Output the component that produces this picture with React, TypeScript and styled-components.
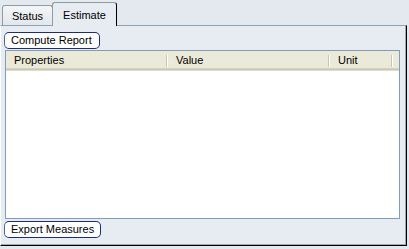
import styled, { createGlobalStyle } from "styled-components";

const GlobalStyle = createGlobalStyle`
  html, body {
    margin: 0;
    padding: 0;
    background: #e3e9ef;
  }
  body {
    font-family: "Liberation Sans", Arial, sans-serif;
    font-size: 11px;
    color: #000;
  }
`;

const Window = styled.div`
  width: 409px;
  height: 249px;
  display: flex;
  flex-direction: column;
  box-sizing: border-box;
  background: #e3e9ef;
`;

const TabBar = styled.div`
  display: flex;
  align-items: flex-end;
  height: 25px;
  padding-left: 2px;
`;

const Tab = styled.div<{ active?: boolean; w: number }>`
  box-sizing: border-box;
  width: ${({ w }) => w}px;
  height: ${({ active }) => (active ? 24 : 20)}px;
  display: flex;
  align-items: center;
  justify-content: center;
  padding-top: ${({ active }) => (active ? 1 : 0)}px;
  border: 1px solid #919b9c;
  border-bottom: none;
  border-right-color: ${({ active }) => (active ? "#000" : "#919b9c")};
  border-radius: 3px 3px 0 0;
  background: ${({ active }) =>
    active ? "#e6ecf2" : "linear-gradient(#f4f6f8, #e2e7ec)"};
  margin-bottom: ${({ active }) => (active ? -1 : 0)}px;
  position: relative;
  z-index: ${({ active }) => (active ? 1 : 0)};
  & + & {
    margin-left: -1px;
  }
`;

const Panel = styled.div`
  box-sizing: border-box;
  width: 407px;
  height: 221px;
  display: flex;
  flex-direction: column;
  align-items: flex-start;
  padding: 6px 6px 0 3px;
  background: #e6ecf2;
  border-top: 1px solid #8fa2b4;
  border-left: 1px solid #ffffff;
  border-right: 1px solid #000;
  border-bottom: 1px solid #000;
  box-shadow: inset -1px -1px 0 #a0a8ad;
`;

const Button = styled.button<{ w: number }>`
  box-sizing: border-box;
  width: ${({ w }) => w}px;
  height: 17px;
  padding: 0 0 0 6px;
  text-align: left;
  font: inherit;
  color: #000;
  background: #fff;
  border: 1px solid #1d2d78;
  border-radius: 5px;
  border-left-color: #5a6494;
  line-height: 15px;
`;

const Table = styled.div`
  box-sizing: border-box;
  width: 395px;
  height: 169px;
  margin: 1px 0 2px 1px;
  background: #fff;
  border: 1px solid #7f9db9;
  display: flex;
  flex-direction: column;
`;

const HeaderRow = styled.div`
  display: grid;
  grid-template-columns: 160px 162px 63px 1fr;
  height: 20px;
  background: #ebe9d8;
  box-shadow: inset 0 -1px 0 #e2decd, inset 0 -2px 0 #cbc7b8,
    inset 0 -3px 0 #d6d2c2;
`;

const HeaderCell = styled.div<{ pad: number; sep?: boolean }>`
  display: flex;
  align-items: center;
  padding-left: ${({ pad }) => pad}px;
  padding-bottom: 2px;
  position: relative;
  &::before {
    content: "";
    display: ${({ sep }) => (sep ? "block" : "none")};
    position: absolute;
    left: 0;
    top: 4px;
    height: 12px;
    width: 1px;
    background: #c7c5b2;
    box-shadow: 1px 0 0 #fff;
  }
`;

export default function App() {
  return (
    <>
      <GlobalStyle />
      <Window>
        <TabBar>
          <Tab w={51}>Status</Tab>
          <Tab w={65} active>
            Estimate
          </Tab>
        </TabBar>
        <Panel>
          <Button w={96}>Compute Report</Button>
          <Table>
            <HeaderRow>
              <HeaderCell pad={8}>Properties</HeaderCell>
              <HeaderCell pad={10} sep>
                Value
              </HeaderCell>
              <HeaderCell pad={10} sep>
                Unit
              </HeaderCell>
              <HeaderCell pad={0} sep />
            </HeaderRow>
          </Table>
          <Button w={97}>Export Measures</Button>
        </Panel>
      </Window>
    </>
  );
}
